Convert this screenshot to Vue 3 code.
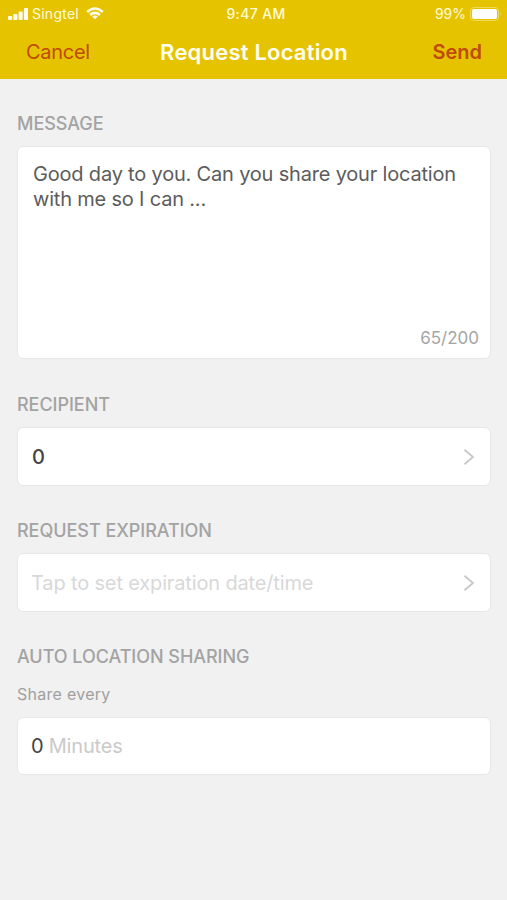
<script setup>
const signalBars = [
  { x: 0, h: 4 },
  { x: 5.3, h: 6 },
  { x: 10.6, h: 8.5 },
  { x: 15.9, h: 12 },
]
</script>

<template>
  <div class="screen">
    <header>
      <div class="status">
        <div class="carrier">
          <svg class="signal" width="20" height="12" viewBox="0 0 20 12">
            <rect v-for="b in signalBars" :key="b.x" :x="b.x" :y="12 - b.h" width="4.1" :height="b.h" rx="1" fill="#fffdf0" />
          </svg>
          <span class="operator">Singtel</span>
          <svg class="wifi" width="18" height="13" viewBox="0 0 18 13">
            <g fill="none" stroke="#fffdf0" stroke-width="2.5">
              <path d="M1.2 5 Q9 -2 16.8 5" />
              <path d="M4.1 8 Q9 3.8 13.9 8" />
            </g>
            <path d="M9 12.3 L6.2 9.6 Q9 7.4 11.8 9.6 Z" fill="#fffdf0" />
          </svg>
        </div>
        <span class="clock">9:47 AM</span>
        <div class="power">
          <span class="percent">99%</span>
          <svg width="32" height="14" viewBox="0 0 32 14">
            <rect x="0.5" y="0.5" width="28" height="13" rx="3.5" fill="none" stroke="#eed958" />
            <rect x="2" y="2" width="25" height="10" rx="2" fill="#fff" />
            <path d="M30 5 Q31.8 7 30 9 Z" fill="#f0dc66" />
          </svg>
        </div>
      </div>
      <nav>
        <span class="cancel">Cancel</span>
        <span class="title">Request Location</span>
        <span class="send">Send</span>
      </nav>
    </header>

    <main>
      <h2>MESSAGE</h2>
      <section class="card message">
        <p>Good day to you. Can you share your location<br />with me so I can ...</p>
        <span class="count">65/200</span>
      </section>

      <h2>RECIPIENT</h2>
      <section class="card row recipient">
        <span class="value strong">0</span>
        <svg class="chevron" width="12" height="18" viewBox="0 0 12 18"><path d="M1.5 1.8 L10 9 L1.5 16.2" /></svg>
      </section>

      <h2>REQUEST EXPIRATION</h2>
      <section class="card row">
        <span class="placeholder">Tap to set expiration date/time</span>
        <svg class="chevron" width="12" height="18" viewBox="0 0 12 18"><path d="M1.5 1.8 L10 9 L1.5 16.2" /></svg>
      </section>

      <h2>AUTO LOCATION SHARING</h2>
      <h3>Share every</h3>
      <section class="card row interval">
        <span class="value">0</span>
        <span class="unit">Minutes</span>
      </section>
    </main>
  </div>
</template>

<style>
body {
  background: #f1f1f1;
}
</style>

<style scoped>
.screen {
  box-sizing: border-box;
  width: 507px;
  height: 900px;
  overflow: hidden;
  background: #f1f1f1;
  font-family: Inter, "Liberation Sans", sans-serif;
  white-space: nowrap;
}
header {
  height: 79px;
  background: #e6c300;
}
.status {
  display: grid;
  grid-template-columns: 1fr auto 1fr;
  align-items: center;
  height: 27px;
  padding: 0 5px 0 8px;
  color: #fffbd9;
  font-size: 14px;
}
.carrier,
.power {
  display: flex;
  align-items: center;
}
.power {
  justify-content: flex-end;
  gap: 4px;
}
.operator {
  margin: 0 7px 0 4px;
  letter-spacing: 0.25px;
}
.clock {
  padding-left: 2px;
  font-weight: 500;
  letter-spacing: 0.35px;
}
nav {
  display: grid;
  grid-template-columns: 1fr auto 1fr;
  align-items: center;
  height: 50px;
  padding: 0 25px 0 26px;
  color: #c04a08;
  font-size: 20px;
}
.cancel {
  letter-spacing: -0.3px;
}
.title {
  color: #fffef2;
  font-size: 22px;
  font-weight: 600;
  letter-spacing: 0.2px;
}
.send {
  justify-self: end;
  font-weight: 600;
}
main {
  padding: 34px 16px 0 17px;
}
h2,
h3,
p {
  margin: 0;
}
h2 {
  height: 22px;
  margin-bottom: 11px;
  color: #a3a3a3;
  font-size: 18px;
  font-weight: 500;
  line-height: 22px;
  letter-spacing: -0.04px;
}
h3 {
  height: 20px;
  margin: 16px 0 13px;
  color: #a0a0a0;
  font-size: 16px;
  font-weight: 400;
  line-height: 20px;
  letter-spacing: 0.27px;
}
.card {
  box-sizing: border-box;
  border: 1px solid #e7e7e7;
  border-radius: 6px;
  background: #fff;
}
.message {
  display: flex;
  flex-direction: column;
  justify-content: space-between;
  height: 213px;
  margin-bottom: 35px;
  padding: 15px 11px 10px 15px;
}
.message p {
  color: #5c5c5c;
  font-size: 20px;
  line-height: 25px;
  letter-spacing: -0.19px;
}
.count {
  align-self: flex-end;
  color: #a5a5a5;
  font-size: 17px;
  line-height: 20px;
}
.row {
  display: flex;
  align-items: center;
  height: 59px;
  margin-bottom: 34px;
  padding: 0 15px 0 13px;
  font-size: 20px;
}
.recipient {
  padding-left: 14px;
}
.interval {
  height: 58px;
}
.value {
  color: #444;
}
.strong {
  font-weight: 500;
}
.placeholder {
  color: #d8d8d8;
  letter-spacing: -0.15px;
}
.unit {
  margin-left: 5px;
  color: #cacaca;
  letter-spacing: -0.15px;
}
.chevron {
  margin-left: auto;
  fill: none;
  stroke: #c8c8c8;
  stroke-width: 1.8;
}
</style>
